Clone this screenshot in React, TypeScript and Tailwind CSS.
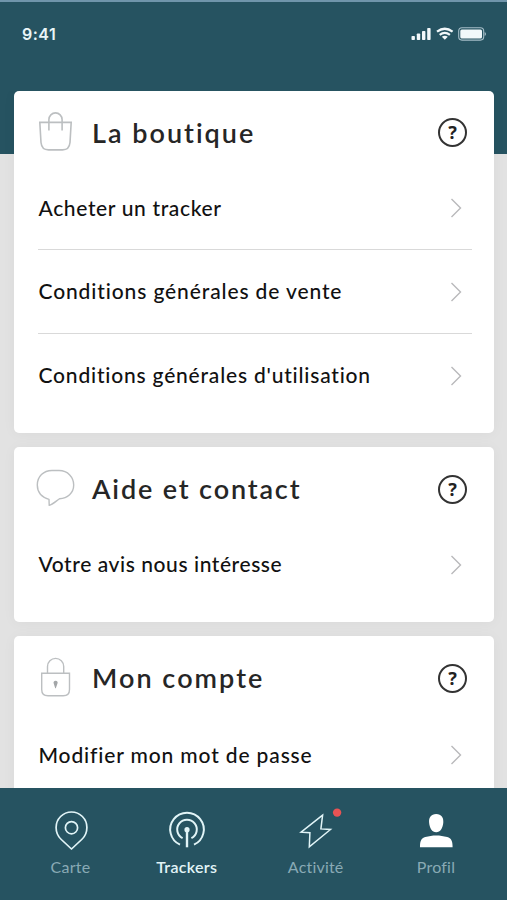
import type { ReactNode } from 'react';

function BagIcon() {
  return (
    <svg width="40" height="44" viewBox="35 111 40 44" fill="none" stroke="#bcbfc1" strokeWidth="1.6">
      <path d="M39.8 122.4H71.2L70 142.5Q69.3 149.9 62.5 149.9H48.5Q41.7 149.9 41 142.5Z" />
      <path d="M48.9 130.5V119.5A6.6 6.6 0 0 1 62.1 119.5V130.5" />
    </svg>
  );
}

function BubbleIcon() {
  return (
    <svg width="40" height="44" viewBox="35 467 40 44" fill="none" stroke="#bcbfc1" strokeWidth="1.4" strokeLinejoin="round">
      <path d="M52 470.500H59C68 470.500 73.700 477.500 73.700 485C73.700 493 67.500 498.300 59.500 498.700C55.500 501.500 52.500 504.500 49.200 505.300L49 499.300C42 497.200 37.300 492 37.300 485C37.300 476.500 43.500 470.500 52 470.500Z" />
    </svg>
  );
}

function LockIcon() {
  return (
    <svg width="40" height="44" viewBox="35 656 40 44" fill="none" stroke="#bcbfc1" strokeWidth="1.4">
      <path d="M41.700 673.300H69.500V689.500Q69.500 695.800 63.200 695.800H48Q41.700 695.800 41.700 689.500Z" />
      <path d="M47.500 673V666.500A8.100 8.100 0 0 1 63.700 666.500V673" />
      <path d="M55.600 680.700A2.100 2.100 0 0 1 57.300 684L55.800 688.300H55.200L53.900 684A2.100 2.100 0 0 1 55.600 680.700Z" fill="#a3a6a8" stroke="none" />
    </svg>
  );
}

function HelpButton() {
  return (
    <button className="flex size-[29px] items-center justify-center rounded-full border-2 border-[#333] pb-px font-['Noto_Sans'] text-[18px] leading-none font-bold text-[#222]">
      ?
    </button>
  );
}

function Chevron() {
  return (
    <svg width="12" height="20" viewBox="0 0 12 20" fill="none" stroke="#b9b9bb" strokeWidth="1.400">
      <path d="M1.500 1L10.500 10L1.500 19" />
    </svg>
  );
}

type CardProps = { icon: ReactNode; title: string; titleClass: string; headerClass: string; children: ReactNode };

function Card({ icon, title, titleClass, headerClass, children }: CardProps) {
  return (
    <section className="shrink-0 rounded-[5px] bg-white pb-[15px] shadow-[0_1px_14px_rgba(0,0,0,0.04)]">
      <div className={'flex items-center pr-[27px] pl-[21px] ' + headerClass}>
        {icon}
        <h2 className={'ml-[17px] flex-1 whitespace-nowrap text-[27px] leading-8 font-semibold text-[#262626] ' + titleClass}>{title}</h2>
        <HelpButton />
      </div>
      <ul className="mr-[22px] ml-[24px] divide-y divide-[#d9d9d9]">{children}</ul>
    </section>
  );
}

function Row({ label, className }: { label: string; className: string }) {
  return (
    <li className="flex h-[84px] items-center justify-between pr-[10px] pl-[0.500px]">
      <span className={'whitespace-nowrap text-[21px] leading-7 font-medium text-[#111] ' + className}>{label}</span>
      <Chevron />
    </li>
  );
}

function Tab({ icon, label, className }: { icon: ReactNode; label: string; className: string }) {
  return (
    <button className="flex w-[110px] flex-col items-center pt-[20px]">
      {icon}
      <span className={'mt-[3px] whitespace-nowrap text-[16px] leading-6 ' + className}>{label}</span>
    </button>
  );
}

function StatusBar() {
  return (
    <div className="flex items-center justify-between pt-[20px] pr-[21px] pl-[22px]">
      <span className="font-['Inter'] text-[16px] leading-6 font-semibold tracking-[0.5px] text-[#e9f5f8]">9:41</span>
      <svg width="76" height="16" viewBox="410 26 76 16">
        <g fill="#f2f8fa">
          <rect x="411.500" y="36" width="3.400" height="4" rx="0.800" />
          <rect x="416.800" y="33.500" width="3.400" height="6.500" rx="0.800" />
          <rect x="422" y="31" width="3.400" height="9" rx="0.800" />
          <rect x="427.200" y="28" width="3.400" height="12" rx="0.800" />
          <path d="M444.800 39.800L441.800 36.800Q444.800 34.600 447.800 36.800Z" />
          <rect x="460.300" y="29.500" width="21.700" height="9" rx="1.500" />
        </g>
        <g fill="none" stroke="#f2f8fa" strokeWidth="2.200">
          <path d="M437 31.700Q444.800 25.800 452.600 31.700" />
          <path d="M439.700 34.900Q444.800 30.900 449.900 34.900" />
        </g>
        <rect x="458.700" y="27.800" width="25" height="12.300" rx="3.300" fill="none" stroke="#a5bdc7" strokeWidth="1.100" />
        <path d="M484.600 32V36Q486 35.300 486 34Q486 32.700 484.600 32Z" fill="#a5bdc7" />
      </svg>
    </div>
  );
}

const pinIcon = (
  <svg width="44" height="44" viewBox="48 808 44 44" fill="none" stroke="#e1f4f7" strokeWidth="1.700" strokeLinejoin="round">
    <path d="M70.500 849L60.300 839.500C56.800 836.200 55.100 832.300 55.100 827.400A15.400 15.400 0 0 1 85.900 827.400C85.900 832.300 84.200 836.200 80.700 839.500Z" />
    <circle cx="70.500" cy="827.700" r="6.100" />
  </svg>
);

const trackerIcon = (
  <svg width="44" height="44" viewBox="164.700 808 44 44" fill="none" stroke="#e1f4f7" strokeWidth="2">
    <path d="M179.700 844.700A16.800 16.800 0 1 1 193.700 844.700" />
    <path d="M182.300 838.200A9.800 9.800 0 1 1 191.100 838.200" />
    <path d="M186.700 829.700V847.300" strokeWidth="2.400" />
    <circle cx="186.700" cy="829.700" r="2.600" fill="#e1f4f7" stroke="none" />
  </svg>
);

const activityIcon = (
  <svg className="overflow-visible" width="44" height="44" viewBox="293.700 808 44 44" fill="none" stroke="#e1f4f7" strokeWidth="1.500">
    <path d="M322.300 815.200L300.800 832.200L309.600 832.700L309 846.800L330.200 829.500L320.600 828.900Z" />
    <circle cx="336.800" cy="812.600" r="4.200" fill="#e95354" stroke="none" />
  </svg>
);

const profileIcon = (
  <svg width="44" height="44" viewBox="414 808 44 44" fill="#fff">
    <path d="M436.200 814C441.500 814 443.700 817.600 443.300 822.500C442.900 828 440.300 832.300 436.200 832.300C432.100 832.300 429.500 828 429.100 822.500C428.700 817.600 430.900 814 436.200 814Z" />
    <path d="M420 847.200C420 841 421.200 838.200 425.300 837.100C429 836.100 432.300 835.400 436.200 835.400C440.100 835.400 443.500 836.100 447.200 837.100C451.300 838.200 452.600 841 452.600 847.200Z" />
  </svg>
);

export default function App() {
  return (
    <div className="flex h-[900px] w-[507px] flex-col overflow-hidden bg-[#e2e2e2] font-['Lato','Noto_Sans',sans-serif]">
      <header className="h-[154px] shrink-0 border-t-2 border-[#7095ab] bg-[#265361]">
        <StatusBar />
      </header>
      <main className="-mt-[63px] flex min-h-0 flex-1 flex-col gap-[14px] overflow-hidden pr-[13px] pl-[14px]">
        <Card icon={<BagIcon />} title="La boutique" titleClass="tracking-[2px]" headerClass="h-[75px] pt-[8px]">
          <Row label="Acheter un tracker" className="tracking-[0.640px]" />
          <Row label="Conditions générales de vente" className="pb-[2px] tracking-[0.880px]" />
          <Row label="Conditions générales d'utilisation" className="pb-[2px] tracking-[0.800px]" />
        </Card>
        <Card icon={<BubbleIcon />} title="Aide et contact" titleClass="tracking-[1.850px]" headerClass="h-[76px] pt-[8px]">
          <Row label="Votre avis nous intéresse" className="pb-[2px] tracking-[0.570px]" />
        </Card>
        <Card icon={<LockIcon />} title="Mon compte" titleClass="tracking-[2.050px]" headerClass="h-[77px] pt-[7px]">
          <Row label="Modifier mon mot de passe" className="tracking-[0.860px]" />
        </Card>
      </main>
      <nav className="flex h-[112px] shrink-0 bg-[#265361] pl-[15.500px]">
        <Tab icon={pinIcon} label="Carte" className="tracking-[0.300px] text-[#89aab5]" />
        <div className="w-[6.200px]" />
        <Tab icon={trackerIcon} label="Trackers" className="font-semibold tracking-[0.300px] text-[#e1f4f7]" />
        <div className="w-[19px]" />
        <Tab icon={activityIcon} label="Activité" className="tracking-[0.200px] text-[#89aab5]" />
        <div className="w-[10.300px]" />
        <Tab icon={profileIcon} label="Profil" className="tracking-[0.200px] text-[#89aab5]" />
      </nav>
    </div>
  );
}
